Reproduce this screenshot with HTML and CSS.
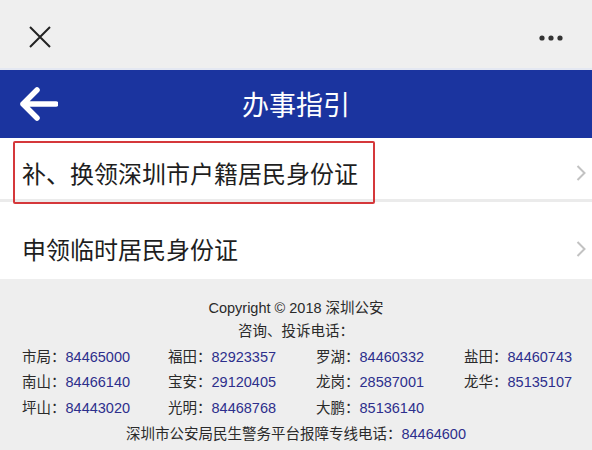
FILE: index.html
```html
<!DOCTYPE html>
<html lang="zh-CN">
<head>
<meta charset="utf-8">
<title>办事指引</title>
<link rel="stylesheet" href="styles.css">
</head>
<body>
<div class="page">
  <header class="topbar">
    <svg class="close" width="24" height="24" viewBox="0 0 24 24"><path d="M2 2 L22 22 M22 2 L2 22" stroke="#222" stroke-width="2" fill="none"/></svg>
    <svg class="more" width="28" height="8" viewBox="0 0 28 8"><circle cx="4" cy="4" r="2.6" fill="#333"/><circle cx="13" cy="4" r="2.6" fill="#333"/><circle cx="22" cy="4" r="2.6" fill="#333"/></svg>
  </header>
  <nav class="navbar">
    <svg class="back" width="38" height="34" viewBox="0 0 38 34"><path d="M17 3 L3 17 L17 31 M3 17 H36" stroke="#fff" stroke-width="5.5" fill="none" stroke-linecap="round" stroke-linejoin="round"/></svg>
    <h1 class="title">办事指引</h1>
  </nav>
  <ul class="list">
    <li class="item item-first">
      <span class="item-text">补、换领深圳市户籍居民身份证</span>
      <svg class="chev" width="10" height="16" viewBox="0 0 10 16"><path d="M1.5 1 L8.5 8 L1.5 15" stroke="#c2c2c2" stroke-width="2" fill="none"/></svg>
      <div class="highlight"></div>
    </li>
    <li class="item item-second">
      <span class="item-text">申领临时居民身份证</span>
      <svg class="chev" width="10" height="16" viewBox="0 0 10 16"><path d="M1.5 1 L8.5 8 L1.5 15" stroke="#c2c2c2" stroke-width="2" fill="none"/></svg>
    </li>
  </ul>
  <footer class="footer">
    <p class="line copy">Copyright © 2018 深圳公安</p>
    <p class="line">咨询、投诉电话：</p>
    <div class="phones">
      <span class="ph">市局：<b>84465000</b></span>
      <span class="ph">福田：<b>82923357</b></span>
      <span class="ph">罗湖：<b>84460332</b></span>
      <span class="ph">盐田：<b>84460743</b></span>
      <span class="ph">南山：<b>84466140</b></span>
      <span class="ph">宝安：<b>29120405</b></span>
      <span class="ph">龙岗：<b>28587001</b></span>
      <span class="ph">龙华：<b>85135107</b></span>
      <span class="ph">坪山：<b>84443020</b></span>
      <span class="ph">光明：<b>84468768</b></span>
      <span class="ph">大鹏：<b>85136140</b></span>
    </div>
    <p class="line last">深圳市公安局民生警务平台报障专线电话：<b>84464600</b></p>
  </footer>
</div>
</body>
</html>
```

FILE: styles.css
```css
* { box-sizing: border-box; }
html, body { margin: 0; padding: 0; }
body {
  width: 592px;
  height: 450px;
  overflow: hidden;
  background: #eeeeee;
  font-family: "Liberation Sans", "Noto Sans CJK SC", sans-serif;
  color: #222;
}
.page { display: flex; flex-direction: column; }

.topbar {
  height: 70px;
  background: #efefef;
  border-bottom: 2px solid #e4e8f2;
  display: flex;
  align-items: center;
  justify-content: space-between;
  padding: 6px 26px 0 28px;
}
.close { width: 24px; height: 24px; }
.more { margin-top: 2px; }

.navbar {
  height: 68px;
  background: #1b349f;
  display: flex;
  align-items: center;
  position: relative;
  padding-left: 20px;
}
.back { display: block; }
.title {
  position: absolute;
  left: 0;
  right: 0;
  top: 0;
  bottom: 0;
  margin: 0;
  display: flex;
  align-items: center;
  justify-content: center;
  font-family: "Noto Sans CJK SC", sans-serif;
  font-weight: 400;
  font-size: 27px;
  color: #fff;
  padding-bottom: 2px;
  pointer-events: none;
}

.list { list-style: none; margin: 0; padding: 0; }
.item {
  position: relative;
  background: #fff;
  display: flex;
  align-items: center;
  justify-content: space-between;
  padding: 0 6px 0 22px;
}
.item-first { height: 64px; padding-top: 8px; border-bottom: 3px solid #ebebeb; z-index: 1; }
.item-second { height: 77px; padding-top: 16px; }
.item-text {
  font-family: "Noto Sans CJK SC", sans-serif;
  font-size: 24px;
  color: #1e1e1e;
}
.chev { display: block; }
.highlight {
  position: absolute;
  left: 13px;
  top: 3px;
  width: 362px;
  height: 63px;
  border: 2px solid #d5383b;
  border-radius: 2px;
  z-index: 2;
}

.footer {
  background: #eeeeee;
  padding-top: 18px;
  font-size: 14.5px;
  color: #2a2a2a;
}
.footer b { font-weight: 400; color: #2d2f8c; }
.line { margin: 0; text-align: center; height: 23px; line-height: 23px; }
.copy { font-size: 14.5px; }
.phones {
  display: grid;
  grid-template-columns: 146px 148px 148px 148px;
  grid-auto-rows: 25.5px;
  align-items: center;
  padding-left: 22px;
  margin-top: 0;
}
.ph { white-space: nowrap; font-family: "Noto Sans CJK SC", sans-serif; line-height: 20px; height: 20px; }
.ph b { font-family: "Liberation Sans", sans-serif; line-height: 20px; }
.last { margin-top: 3px; font-family: "Noto Sans CJK SC", sans-serif; line-height: 20px; height: 20px; }
.last b { font-family: "Liberation Sans", sans-serif; line-height: 20px; }
```
